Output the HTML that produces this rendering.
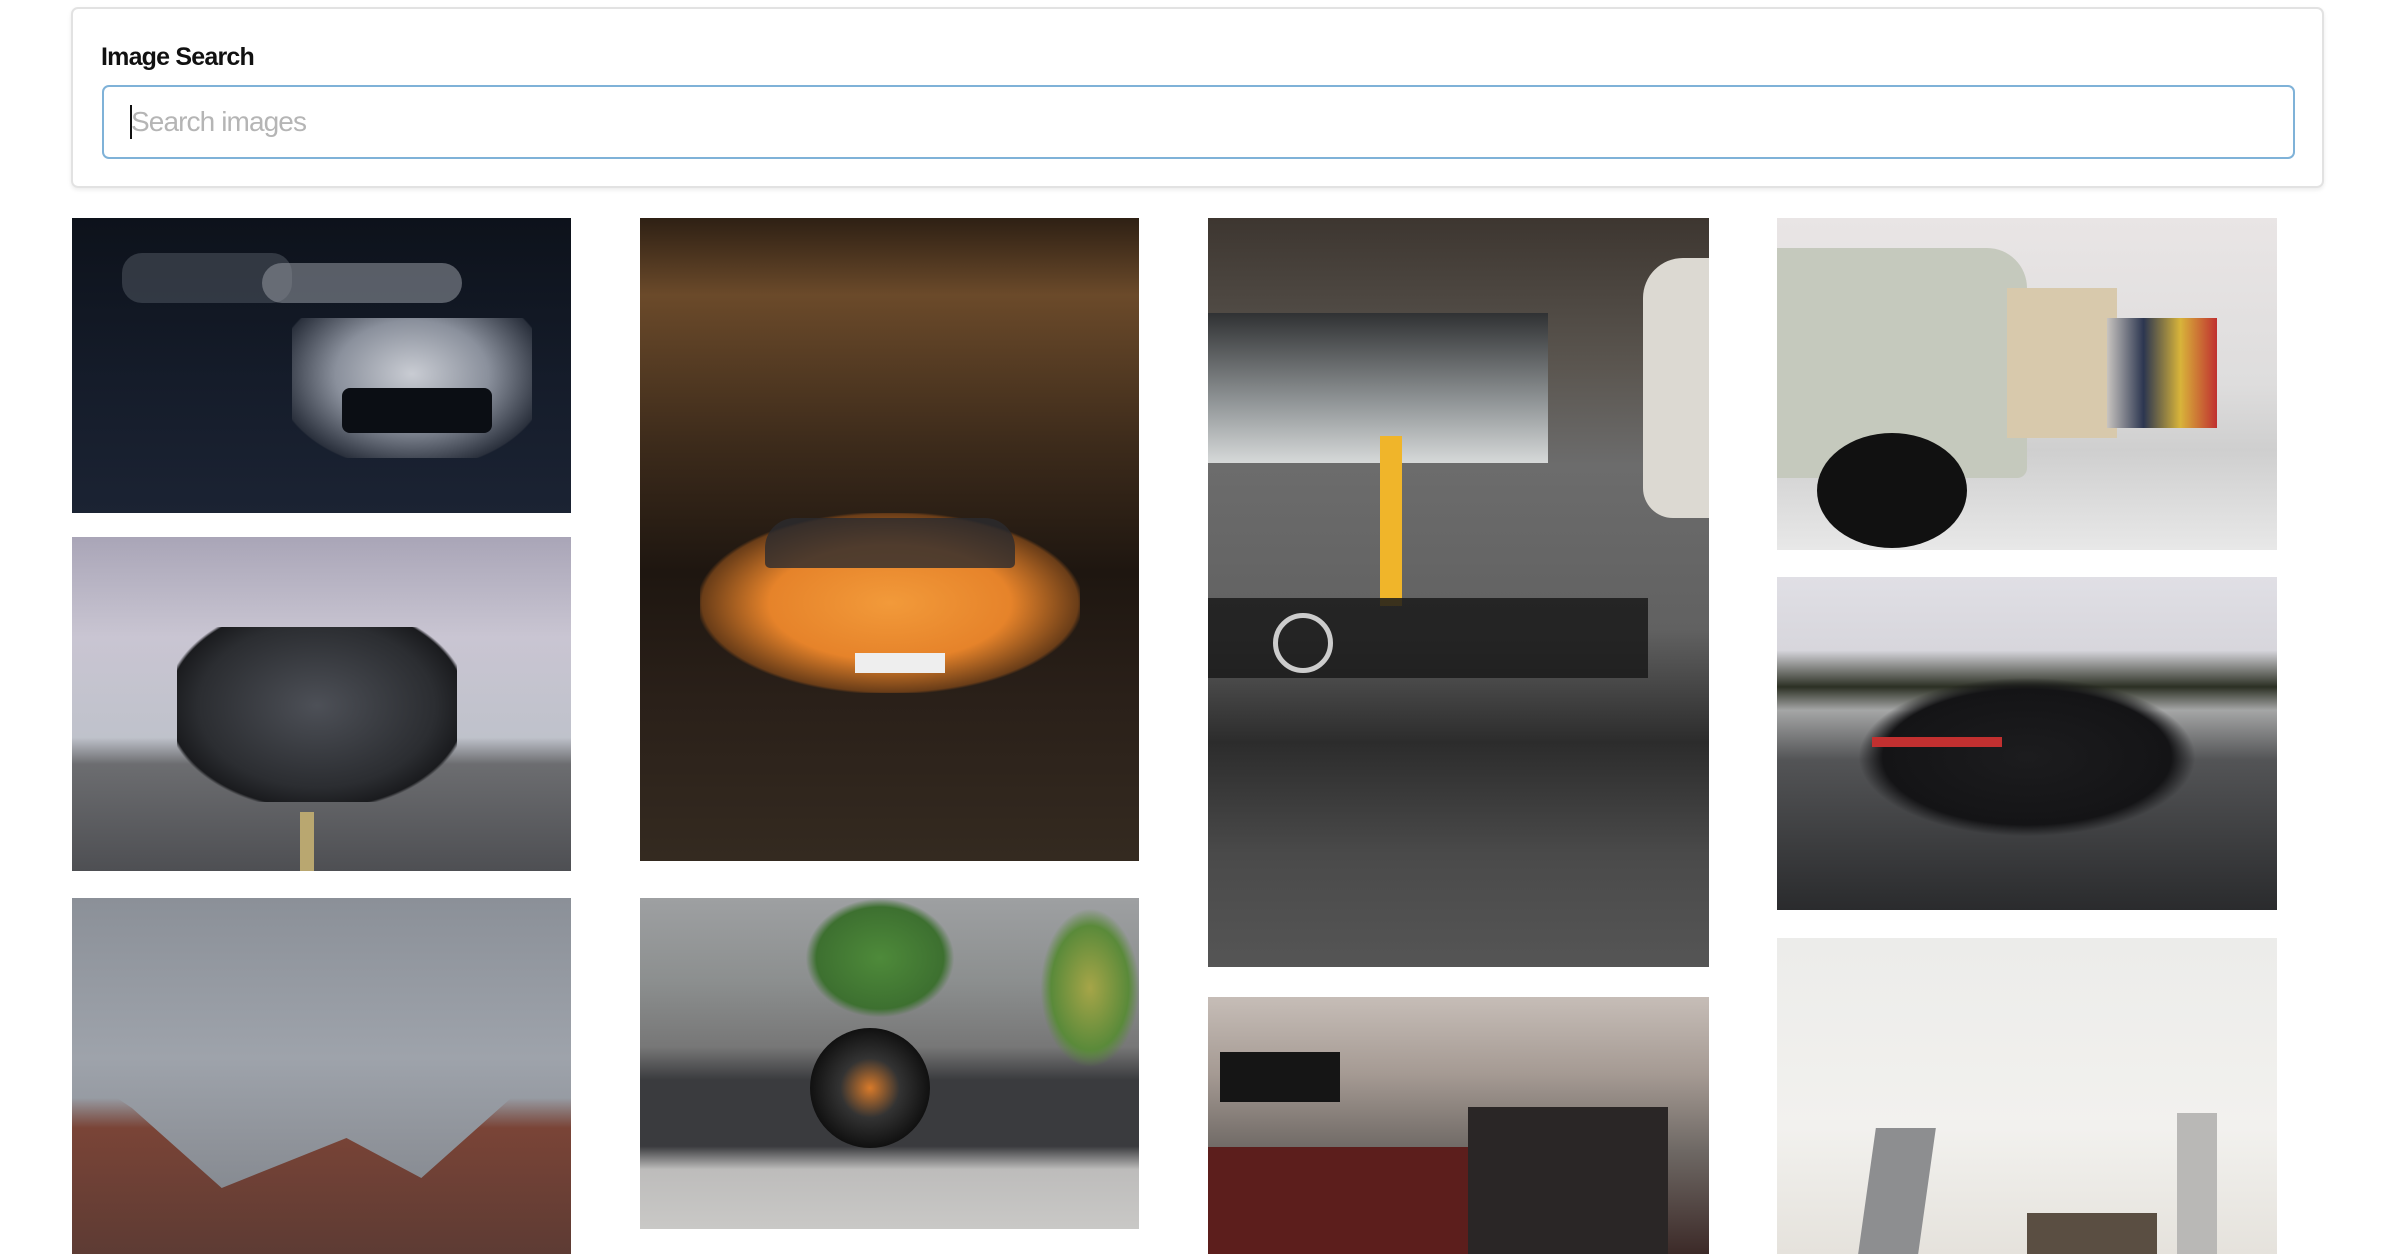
<!DOCTYPE html>
<html><head><meta charset="utf-8"><style>
*{margin:0;padding:0;box-sizing:border-box}
html,body{width:2394px;height:1254px;overflow:hidden;background:#fff;font-family:"Liberation Sans",sans-serif}
.card{position:absolute;left:71px;top:7px;width:2253px;height:181px;border:2px solid #e2e2e2;border-radius:7px;box-shadow:0 2px 4px rgba(0,0,0,.08)}
.lbl{position:absolute;left:101px;top:43px;font-size:25px;font-weight:bold;color:#111;letter-spacing:-0.8px}
.inp{position:absolute;left:102px;top:85px;width:2193px;height:74px;border:2px solid #7fb2d8;border-radius:7px}
.ph{position:absolute;left:131px;top:106px;font-size:28px;color:#b5b5b5;letter-spacing:-0.9px}
.cur{position:absolute;left:130px;top:105px;width:2px;height:34px;background:#111}
.im{position:absolute;overflow:hidden}
.im div{position:absolute}
</style></head><body>
<div class="card"></div>
<div class="lbl">Image Search</div>
<div class="inp"></div>
<div class="cur"></div>
<div class="ph">Search images</div>

<!-- col1 -->
<div class="im" style="left:72px;top:218px;width:499px;height:295px;background:linear-gradient(180deg,#0d121b 0%,#151c2a 55%,#1b2333 100%)">
 <div style="left:50px;top:35px;width:170px;height:50px;background:#4a505a;border-radius:20px;opacity:.6"></div>
 <div style="left:190px;top:45px;width:200px;height:40px;background:#8a8f98;border-radius:20px;opacity:.6"></div>
 <div style="left:220px;top:100px;width:240px;height:140px;background:radial-gradient(ellipse at 50% 40%,#c9ccd3 0%,#8a909c 45%,#2a303c 80%,transparent 81%)"></div>
 <div style="left:270px;top:170px;width:150px;height:45px;background:#0b0e14;border-radius:8px"></div>
</div>
<div class="im" style="left:72px;top:537px;width:499px;height:334px;background:linear-gradient(180deg,#a9a5b7 0%,#c9c5d2 30%,#bfc2cb 60%,#6c6d70 68%,#4e4f53 100%)">
 <div style="left:105px;top:90px;width:280px;height:175px;background:radial-gradient(ellipse at 50% 45%,#4d5057 0%,#2b2d31 60%,#1a1b1e 75%,transparent 77%)"></div>
 <div style="left:228px;top:275px;width:14px;height:60px;background:#b9a770"></div>
</div>
<div class="im" style="left:72px;top:898px;width:499px;height:356px;background:linear-gradient(180deg,#8b9098 0%,#9ea3ab 45%,#8e9299 70%,#7a7f86 100%)">
 <div style="left:0;top:170px;width:499px;height:200px;background:linear-gradient(180deg,transparent 0%,transparent 15%,#7a4437 30%,#5a3a33 100%);clip-path:polygon(0 0,12% 20%,30% 60%,45% 45%,55% 35%,70% 55%,88% 15%,100% 0,100% 100%,0 100%)"></div>
</div>

<!-- col2 -->
<div class="im" style="left:640px;top:218px;width:499px;height:643px;background:linear-gradient(180deg,#2e2014 0%,#6b4a2a 12%,#3d2b1b 35%,#1e1610 55%,#2a2019 75%,#342a20 100%)">
 <div style="left:60px;top:295px;width:380px;height:180px;background:radial-gradient(ellipse at 50% 50%,#f29a3a 0%,#e6832a 45%,#6a3d18 70%,transparent 72%)"></div>
 <div style="left:125px;top:300px;width:250px;height:50px;background:#2b2b2e;border-radius:30px 30px 5px 5px;opacity:.8"></div>
 <div style="left:215px;top:435px;width:90px;height:20px;background:#eee"></div>
</div>
<div class="im" style="left:640px;top:898px;width:499px;height:331px;background:linear-gradient(180deg,#9ea0a2 0%,#8c8f8f 25%,#777 45%,#3a3b3e 55%,#3a3b3e 75%,#bdbcbb 82%,#c9c8c6 100%)">
 <div style="left:165px;top:0;width:150px;height:120px;background:radial-gradient(ellipse,#4e8a3a 0%,#3d7030 60%,transparent 70%)"></div>
 <div style="left:400px;top:10px;width:100px;height:160px;background:radial-gradient(ellipse,#a6a548 0%,#5a8a3a 55%,transparent 70%)"></div>
 <div style="left:170px;top:130px;width:120px;height:120px;border-radius:50%;background:radial-gradient(circle,#d87a2a 0%,#333 35%,#111 70%)"></div>
</div>

<!-- col3 -->
<div class="im" style="left:1208px;top:218px;width:501px;height:749px;background:linear-gradient(180deg,#3d3630 0%,#5b5650 20%,#6c6c6c 33%,#616161 55%,#2c2c2c 70%,#4a4a4a 85%,#555 100%)">
 <div style="left:0;top:95px;width:340px;height:150px;background:linear-gradient(180deg,#2a2d30,#9aa0a3 60%,#e9ecec);opacity:.85"></div>
 <div style="left:435px;top:40px;width:66px;height:260px;background:#dcd9d2;border-radius:40px 0 0 30px"></div>
 <div style="left:172px;top:218px;width:22px;height:170px;background:#f0b52a"></div>
 <div style="left:0;top:380px;width:440px;height:80px;background:#1a1a1a;opacity:.85"></div>
 <div style="left:65px;top:395px;width:60px;height:60px;border-radius:50%;border:5px solid #ccc"></div>
</div>
<div class="im" style="left:1208px;top:997px;width:501px;height:257px;background:linear-gradient(180deg,#c6bdb7 0%,#a59a93 30%,#6e6864 60%,#3c2a28 100%)">
 <div style="left:0;top:150px;width:330px;height:107px;background:#5c1e1c"></div>
 <div style="left:260px;top:110px;width:200px;height:147px;background:#2a2626"></div>
 <div style="left:12px;top:55px;width:120px;height:50px;background:#151515"></div>
</div>

<!-- col4 -->
<div class="im" style="left:1777px;top:218px;width:500px;height:332px;background:linear-gradient(180deg,#e9e5e5 0%,#dedddd 50%,#cfcfcf 70%,#e8e8e8 100%)">
 <div style="left:0;top:30px;width:250px;height:230px;background:#c5c9bd;border-radius:0 40px 10px 0"></div>
 <div style="left:230px;top:70px;width:110px;height:150px;background:#d8c9ac"></div>
 <div style="left:330px;top:100px;width:110px;height:110px;background:linear-gradient(90deg,#c8c4c0,#2c3650,#d8b43a,#c03030)"></div>
 <div style="left:40px;top:215px;width:150px;height:115px;border-radius:50%;background:#111"></div>
</div>
<div class="im" style="left:1777px;top:577px;width:500px;height:333px;background:linear-gradient(180deg,#e0dfe5 0%,#d7d6dc 22%,#2c3024 33%,#a5a6a6 40%,#535456 55%,#2a2b2d 100%)">
 <div style="left:80px;top:100px;width:340px;height:160px;background:radial-gradient(ellipse at 50% 50%,#1c1c1e 0%,#141416 60%,transparent 70%)"></div>
 <div style="left:95px;top:160px;width:130px;height:10px;background:#c23030"></div>
</div>
<div class="im" style="left:1777px;top:938px;width:500px;height:316px;background:linear-gradient(180deg,#ececea 0%,#f2f1ee 60%,#e5e2dc 100%)">
 <div style="left:90px;top:190px;width:60px;height:126px;background:#8d8e90;transform:skewX(-8deg)"></div>
 <div style="left:400px;top:175px;width:40px;height:141px;background:#b9b8b6"></div>
 <div style="left:250px;top:275px;width:130px;height:41px;background:#5a4e42"></div>
</div>
</body></html>
